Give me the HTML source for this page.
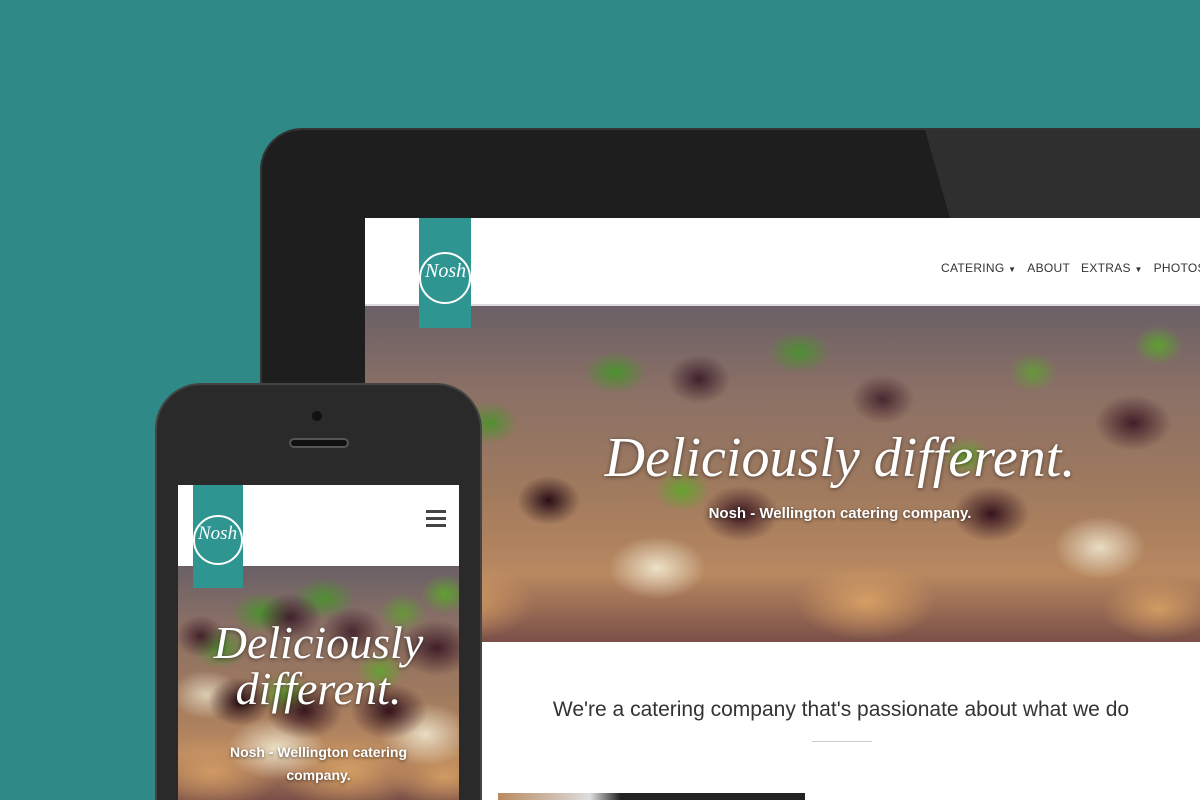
<!DOCTYPE html>
<html style="width:1200px;height:800px;overflow:hidden"><head><meta charset="utf-8"><style>
*{margin:0;padding:0;box-sizing:border-box}
body{width:1200px;height:800px;overflow:hidden;background:#2e8987;position:relative;font-family:"Liberation Sans",sans-serif}
.abs{position:absolute}
.food{overflow:hidden;background:
radial-gradient(ellipse 45px 35px at 22% 58%,rgba(35,8,18,.95),transparent 70%),
radial-gradient(ellipse 55px 40px at 45% 62%,rgba(45,10,25,.9),transparent 70%),
radial-gradient(ellipse 55px 40px at 75% 62%,rgba(40,8,22,.9),transparent 70%),
radial-gradient(ellipse 55px 40px at 92% 35%,rgba(50,15,30,.85),transparent 70%),
radial-gradient(ellipse 45px 35px at 40% 22%,rgba(45,15,30,.8),transparent 70%),
radial-gradient(ellipse 45px 35px at 62% 28%,rgba(50,15,30,.75),transparent 70%),
radial-gradient(ellipse 35px 30px at 8% 30%,rgba(50,15,30,.8),transparent 70%),
radial-gradient(ellipse 45px 30px at 30% 20%,rgba(70,150,40,.9),transparent 70%),
radial-gradient(ellipse 45px 30px at 52% 14%,rgba(70,150,40,.85),transparent 70%),
radial-gradient(ellipse 40px 30px at 15% 35%,rgba(70,150,40,.85),transparent 70%),
radial-gradient(ellipse 40px 30px at 38% 55%,rgba(90,170,40,.85),transparent 70%),
radial-gradient(ellipse 35px 28px at 72% 45%,rgba(90,170,40,.8),transparent 70%),
radial-gradient(ellipse 35px 28px at 95% 12%,rgba(90,170,40,.85),transparent 70%),
radial-gradient(ellipse 35px 28px at 80% 20%,rgba(90,170,40,.7),transparent 70%),
radial-gradient(ellipse 70px 45px at 35% 78%,rgba(240,230,205,.95),transparent 70%),
radial-gradient(ellipse 65px 45px at 88% 72%,rgba(240,230,205,.9),transparent 70%),
radial-gradient(ellipse 50px 35px at 10% 55%,rgba(235,225,200,.8),transparent 70%),
radial-gradient(ellipse 100px 55px at 60% 88%,rgba(215,160,100,.95),transparent 70%),
radial-gradient(ellipse 100px 55px at 12% 88%,rgba(210,155,100,.95),transparent 70%),
radial-gradient(ellipse 80px 45px at 95% 90%,rgba(215,160,100,.9),transparent 70%),
linear-gradient(180deg,#6a6066 0%,#8a7066 25%,#a07a5e 55%,#b88860 80%,#7a5048 100%)}
.tab{left:260px;top:128px;width:940px;height:672px;background:#1e1e1e;border-radius:42px 0 0 0;border:2px solid #333;border-right:0;border-bottom:0}
.phone{left:155px;top:383px;width:327px;height:417px;background:#2a2a2a;border-radius:46px 46px 0 0;border:2px solid #444;border-bottom:0}
.script{font-family:"Liberation Serif",serif;font-style:italic;color:#fff;text-shadow:0 1px 4px rgba(0,0,0,.5)}
.logo{background:#2e9591;overflow:hidden}
</style></head><body>
<div class="abs tab"></div>
<div class="abs" style="left:925px;top:130px;width:275px;height:88px;background:rgba(255,255,255,.08);clip-path:polygon(0 0,100% 0,100% 100%,25px 100%)"></div>
<div class="abs" style="left:365px;top:218px;width:835px;height:582px;background:#fff"></div>
<div class="abs food" style="left:365px;top:305px;width:835px;height:337px"></div>
<div class="abs" style="left:365px;top:304px;width:835px;height:2px;background:#ddd"></div>
<div class="abs logo" style="left:419px;top:218px;width:52px;height:110px">
<div class="abs" style="left:0;top:34px;width:52px;height:52px;border:2px solid #fff;border-radius:50%"></div>
<div class="abs script" style="left:6px;top:42px;font-size:20px;text-shadow:none">Nosh</div></div>
<div class="abs" style="left:941px;top:261px;font-size:12px;color:#333;letter-spacing:.3px;white-space:nowrap">CATERING <span style="font-size:8px">▼</span>&nbsp;&nbsp;&nbsp;ABOUT&nbsp;&nbsp;&nbsp;EXTRAS <span style="font-size:8px">▼</span>&nbsp;&nbsp;&nbsp;PHOTOS</div>
<div class="abs script" style="left:580px;top:426px;width:520px;text-align:center;font-size:56px">Deliciously different.</div>
<div class="abs" style="left:600px;top:505px;width:480px;text-align:center;font-size:15px;font-weight:bold;color:#fff;text-shadow:0 1px 3px rgba(0,0,0,.6)">Nosh - Wellington catering company.</div>
<div class="abs" style="left:482px;top:698px;width:718px;text-align:center;font-size:21px;color:#333">We're a catering company that's passionate about what we do</div>
<div class="abs" style="left:812px;top:741px;width:60px;height:1px;background:#ccc"></div>
<div class="abs" style="left:498px;top:793px;width:307px;height:7px;background:linear-gradient(90deg,#b98a60 0,#ddd 30%,#222 40%,#222)"></div>

<div class="abs phone"></div>
<div class="abs" style="left:312px;top:411px;width:10px;height:10px;border-radius:50%;background:#111"></div>
<div class="abs" style="left:289px;top:438px;width:60px;height:10px;border-radius:5px;background:#111;border:2px solid #555"></div>
<div class="abs" style="left:178px;top:485px;width:281px;height:315px;background:#fff"></div>
<div class="abs food" style="left:178px;top:566px;width:281px;height:234px"></div>
<div class="abs logo" style="left:193px;top:485px;width:50px;height:103px">
<div class="abs" style="left:0;top:30px;width:50px;height:50px;border:2px solid #fff;border-radius:50%"></div>
<div class="abs script" style="left:5px;top:38px;font-size:19px;text-shadow:none">Nosh</div></div>
<div class="abs" style="left:426px;top:510px;width:20px;height:3px;background:#444;box-shadow:0 7px 0 #444,0 14px 0 #444"></div>
<div class="abs script" style="left:178px;top:620px;width:281px;text-align:center;font-size:46px;line-height:46px">Deliciously<br>different.</div>
<div class="abs" style="left:178px;top:741px;width:281px;text-align:center;font-size:14px;line-height:23px;font-weight:bold;color:#fff;text-shadow:0 1px 3px rgba(0,0,0,.6)">Nosh - Wellington catering<br>company.</div>
</body></html>
